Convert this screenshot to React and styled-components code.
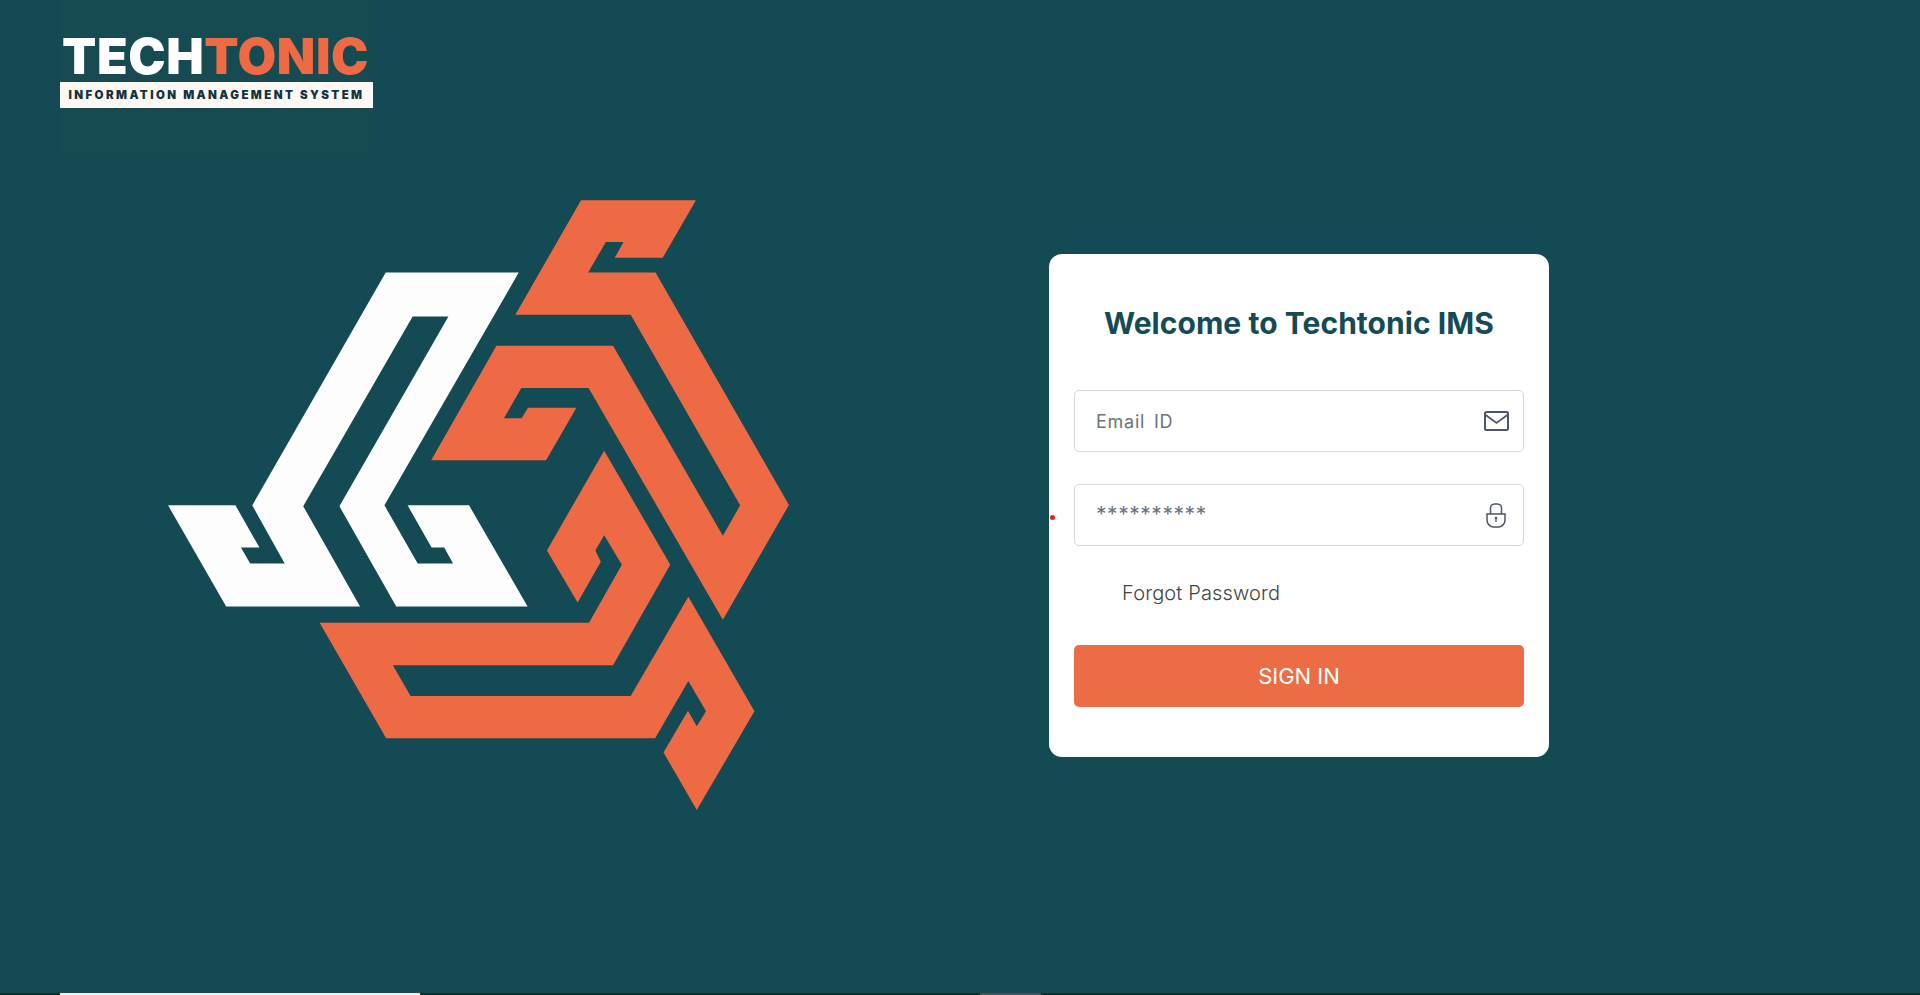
import React from "react";
import styled, { createGlobalStyle } from "styled-components";

const GlobalStyle = createGlobalStyle`
  html, body {
    margin: 0;
    padding: 0;
    background: #144a53;
    overflow: hidden;
  }
  * {
    box-sizing: border-box;
  }
`;

const Page = styled.div`
  height: 995px;
  display: flex;
  flex-direction: column;
  font-family: "Inter", "Liberation Sans", sans-serif;
`;

const Header = styled.header`
  height: 155px;
  padding-left: 60px;
`;

const LogoBlock = styled.div`
  width: 313px;
  height: 155px;
  padding-top: 30px;
  background: #164b52;
`;

const LogoWord = styled.div`
  font-family: "Inter", sans-serif;
  font-weight: 900;
  font-size: 50px;
  line-height: 52px;
  letter-spacing: 0.6px;
  padding-left: 2px;
  color: #fff;
  white-space: nowrap;
`;

const LogoAccent = styled.span`
  color: #ee6a45;
`;

const LogoStrap = styled.div`
  height: 26px;
  line-height: 26px;
  background: #fdf8f3;
  color: #12333f;
  font-size: 11.5px;
  font-weight: 900;
  letter-spacing: 2.4px;
  text-align: center;
  white-space: nowrap;
`;

const Main = styled.main`
  flex: 1;
  display: flex;
  align-items: flex-start;
  padding-left: 150px;
`;

const MarkBox = styled.div`
  width: 660px;
  height: 660px;
  margin-top: 25px;
  flex: none;
`;

const Card = styled.form`
  position: relative;
  width: 500px;
  height: 503px;
  margin: 99px 0 0 239px;
  padding: 50px 25px 0;
  background: #fff;
  border-radius: 13px;
`;

const RedDot = styled.span`
  position: absolute;
  left: 1px;
  top: 261px;
  width: 5px;
  height: 5px;
  border-radius: 50%;
  background: #ec1c24;
`;

const Title = styled.h1`
  margin: 0 0 48px;
  font-size: 30px;
  line-height: 38px;
  font-weight: 700;
  letter-spacing: 0.05px;
  text-align: center;
  color: #154b54;
`;

const Field = styled.div`
  height: 62px;
  margin-bottom: 32px;
  padding: 0 14px 0 21px;
  display: flex;
  align-items: center;
  justify-content: space-between;
  border: 1px solid #d6d6d6;
  border-radius: 5px;
`;

const FieldText = styled.span`
  font-size: ${(p) => p.$size || 18}px;
  letter-spacing: ${(p) => p.$spacing || 0.75}px;
  word-spacing: 3px;
  color: #6b7280;
  transform: translateY(${(p) => p.$shift || 0}px);
`;

const IconSlot = styled.span`
  width: 26px;
  display: flex;
  justify-content: center;
  color: #4b5563;
`;

const Forgot = styled.a`
  display: block;
  margin: -3px 0 34px 48px;
  font-size: 20px;
  font-weight: 300;
  letter-spacing: 0.15px;
  line-height: 36px;
  color: #444;
`;

const Button = styled.button`
  display: block;
  width: 100%;
  height: 62px;
  border: 0;
  border-radius: 5px;
  background: #ec6c46;
  color: #fff;
  font-family: inherit;
  font-size: 22px;
  font-weight: 400;
`;

const ScrollStrip = styled.div`
  height: 2px;
  flex: none;
  display: flex;
  padding-left: 60px;
  background: #1a2a2b;
`;

const StripThumb = styled.span`
  height: 2px;
  width: ${(p) => p.$w}px;
  margin-right: ${(p) => p.$gap || 0}px;
  background: ${(p) => p.$color};
`;

const Mark = () => (
  <svg viewBox="0 0 1568 1568" width="660" height="660">
    <path
      fill="#fdfdfd"
      d="M43 773 203 773 260 873 216 873 238 911 320 911 243 773 560 220 876 220 557 773 636 911 720 911 699 873 669 873 612 773 758 773 897 1013 585 1013 450 775 709 324 624 324 364 775 499 1013 181 1013Z"
    />
    <path
      fill="#ee6a45"
      d="M1024 48 1297 48 1218 185 1104 185 1125 147 1083 147 1041 220 1201 220 1518 772 1361 1045 1042 494 882 494 841 566 883 566 898 541 1013 541 941 666 668 666 823 394 1100 394 1361 845 1402 773 1142 320 868 320Z"
    />
    <path
      fill="#ee6a45"
      d="M1079 643 1236 914 1100 1153 577 1153 619 1226 1142 1226 1279 990 1436 1262 1299 1497 1220 1360 1278 1261 1299 1298 1321 1262 1279 1190 1200 1326 561 1326 403 1052 1043 1052 1121 914 1079 844 1058 880 1071 907 1016 1004 943 880Z"
    />
  </svg>
);

const MailIcon = () => (
  <svg width="25" height="20" viewBox="0 0 25 20" fill="none" stroke="currentColor" strokeWidth="2">
    <rect x="1" y="1" width="23" height="18" rx="1.5" />
    <path d="M1 3.5 12.5 12 24 3.5" strokeWidth="1.7" />
  </svg>
);

const LockIcon = () => (
  <svg width="20" height="25" viewBox="0 0 20 25" fill="none" stroke="currentColor" strokeWidth="1.5">
    <path d="M4.5 11V5.5a4 4 0 0 1 4-4.500h3a4 4 0 0 1 4 4.500V11" />
    <path d="M1 11h18v6.500c0 3-3 6.500-6.500 6.500h-5C4 24 1 20.500 1 17.500Z" />
    <circle cx="10" cy="15" r="1.300" fill="currentColor" stroke="none" />
    <path d="M10 15v4" strokeWidth="1.300" />
  </svg>
);

export default function App() {
  return (
    <Page>
      <GlobalStyle />
      <Header>
        <LogoBlock>
          <LogoWord>
            TECH<LogoAccent>TONIC</LogoAccent>
          </LogoWord>
          <LogoStrap>INFORMATION MANAGEMENT SYSTEM</LogoStrap>
        </LogoBlock>
      </Header>
      <Main>
        <MarkBox>
          <Mark />
        </MarkBox>
        <Card onSubmit={(e) => e.preventDefault()}>
          <RedDot />
          <Title>Welcome to Techtonic IMS</Title>
          <Field>
            <FieldText>Email ID</FieldText>
            <IconSlot>
              <MailIcon />
            </IconSlot>
          </Field>
          <Field>
            <FieldText $shift={-1} $size={21} $spacing={0.55}>
              **********
            </FieldText>
            <IconSlot>
              <LockIcon />
            </IconSlot>
          </Field>
          <Forgot>Forgot Password</Forgot>
          <Button type="submit">SIGN IN</Button>
        </Card>
      </Main>
      <ScrollStrip>
        <StripThumb $w={360} $gap={560} $color="#f2f2f2" />
        <StripThumb $w={61} $color="#4a4f4f" />
      </ScrollStrip>
    </Page>
  );
}
